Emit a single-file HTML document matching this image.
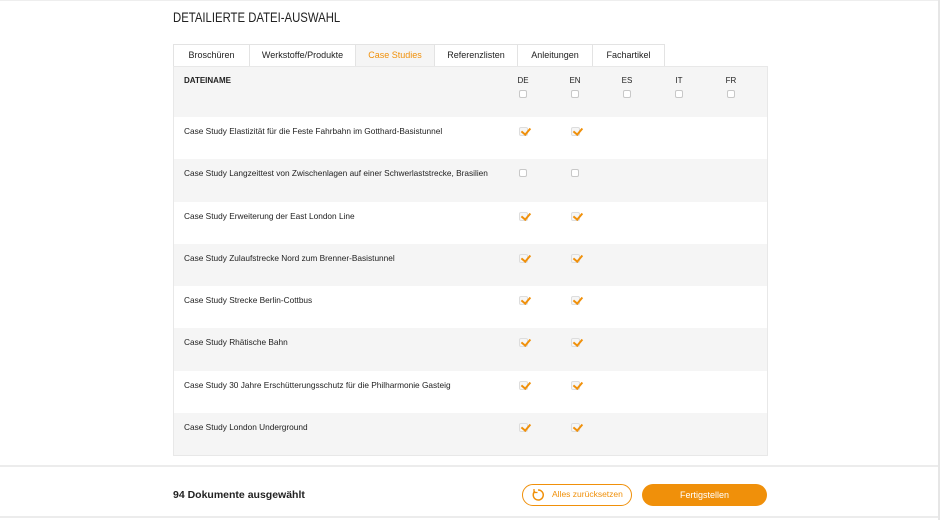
<!DOCTYPE html><html><head><style>
*{margin:0;padding:0;box-sizing:border-box}
body{width:940px;height:520px;background:#fff;font-family:"Liberation Sans",sans-serif;position:relative;overflow:hidden;color:#222}
.rb{position:absolute;right:0;top:0;width:2px;height:520px;background:#e6e6e6}
.tb{position:absolute;left:0;top:0;width:940px;height:1px;background:#eee}
h1{position:absolute;left:173px;top:10px;font-size:13.5px;font-weight:normal;color:#222;transform:scaleX(0.84);transform-origin:0 0;white-space:nowrap}
.tabs{position:absolute;left:173px;top:44px;height:23px;display:flex}
.tab{height:23px;border:1px solid #e3e3e3;border-bottom:none;font-size:9px;line-height:21px;text-align:center;background:#fff;margin-right:-1px}
.tab.a{color:#f0900a;background:#f5f5f5}
.tbl{position:absolute;left:173px;top:66px;width:595px;height:390px;background:#f5f5f5;border:1px solid #e8e8e8}
.hd{height:50px;position:relative}
.row{height:42.3px;position:relative}
.row.w{background:#fff}
.lbl{position:absolute;left:10px;top:9px;font-size:8.3px;white-space:nowrap}
.hd .lbl{font-weight:bold;top:9px;font-size:8px}
.c{position:absolute;width:52px;text-align:center;font-size:8px}
.cb{position:absolute;width:8px;height:8px;border:1px solid #c8c8c8;border-radius:2px;background:#fff}
.ck{position:absolute;width:9px;height:9px;border:1px solid #ddd;border-radius:2px;background:#f6f6f6}
.ck:after{content:"";position:absolute;left:2.5px;top:-2px;width:3.5px;height:7px;border:solid #f0900a;border-width:0 2px 2px 0;transform:rotate(40deg)}
.ft{position:absolute;left:0;top:465px;width:938px;height:53px;border-top:2px solid #ececec;border-bottom:2px solid #ececec;background:#fff}
.cnt{position:absolute;left:173px;top:22px;font-size:10.5px;font-weight:bold}
.b1{position:absolute;left:522px;top:17px;width:110px;height:22px;border:1.5px solid #f0900a;border-radius:11px;color:#f0900a;font-size:8.5px;line-height:19px;padding-left:29px}
.b1 svg{position:absolute;left:8px;top:3px}
.b2{position:absolute;left:642px;top:17px;width:125px;height:22px;background:#f0900a;border-radius:11px;color:#fff;font-size:9px;line-height:22px;text-align:center}
</style></head><body>
<div class="tb"></div><div class="rb"></div>
<h1>DETAILIERTE DATEI-AUSWAHL</h1>
<div class="tabs">
<div class="tab" style="width:77px">Broschüren</div>
<div class="tab" style="width:107px">Werkstoffe/Produkte</div>
<div class="tab a" style="width:80px">Case Studies</div>
<div class="tab" style="width:84px">Referenzlisten</div>
<div class="tab" style="width:76px">Anleitungen</div>
<div class="tab" style="width:73px">Fachartikel</div>
</div>
<div class="tbl">
<div class="hd"><div class="lbl">DATEINAME</div>
<div class="c" style="left:323px;top:9px">DE</div><div class="c" style="left:375px;top:9px">EN</div><div class="c" style="left:427px;top:9px">ES</div><div class="c" style="left:479px;top:9px">IT</div><div class="c" style="left:531px;top:9px">FR</div>
<div class="cb" style="left:345px;top:23px"></div><div class="cb" style="left:397px;top:23px"></div><div class="cb" style="left:449px;top:23px"></div><div class="cb" style="left:501px;top:23px"></div><div class="cb" style="left:553px;top:23px"></div>
</div>
<div class="row w"><div class="lbl">Case Study Elastizität für die Feste Fahrbahn im Gotthard-Basistunnel</div><div class="ck" style="left:345px;top:10px"></div><div class="ck" style="left:397px;top:10px"></div></div>
<div class="row"><div class="lbl">Case Study Langzeittest von Zwischenlagen auf einer Schwerlaststrecke, Brasilien</div><div class="cb" style="left:345px;top:10px"></div><div class="cb" style="left:397px;top:10px"></div></div>
<div class="row w"><div class="lbl">Case Study Erweiterung der East London Line</div><div class="ck" style="left:345px;top:10px"></div><div class="ck" style="left:397px;top:10px"></div></div>
<div class="row"><div class="lbl">Case Study Zulaufstrecke Nord zum Brenner-Basistunnel</div><div class="ck" style="left:345px;top:10px"></div><div class="ck" style="left:397px;top:10px"></div></div>
<div class="row w"><div class="lbl">Case Study Strecke Berlin-Cottbus</div><div class="ck" style="left:345px;top:10px"></div><div class="ck" style="left:397px;top:10px"></div></div>
<div class="row"><div class="lbl">Case Study Rhätische Bahn</div><div class="ck" style="left:345px;top:10px"></div><div class="ck" style="left:397px;top:10px"></div></div>
<div class="row w"><div class="lbl">Case Study 30 Jahre Erschütterungsschutz für die Philharmonie Gasteig</div><div class="ck" style="left:345px;top:10px"></div><div class="ck" style="left:397px;top:10px"></div></div>
<div class="row"><div class="lbl">Case Study London Underground</div><div class="ck" style="left:345px;top:10px"></div><div class="ck" style="left:397px;top:10px"></div></div>
</div>
<div class="ft">
<div class="cnt">94 Dokumente ausgewählt</div>
<div class="b1"><svg width="14" height="14" viewBox="0 0 14 14"><path d="M4 3.2A5 5 0 1 0 7 2" fill="none" stroke="#f0900a" stroke-width="1.5"/><path d="M3 1v3.5h3.5" fill="none" stroke="#f0900a" stroke-width="1.3"/></svg>Alles zurücksetzen</div>
<div class="b2">Fertigstellen</div>
</div>
</body></html>
